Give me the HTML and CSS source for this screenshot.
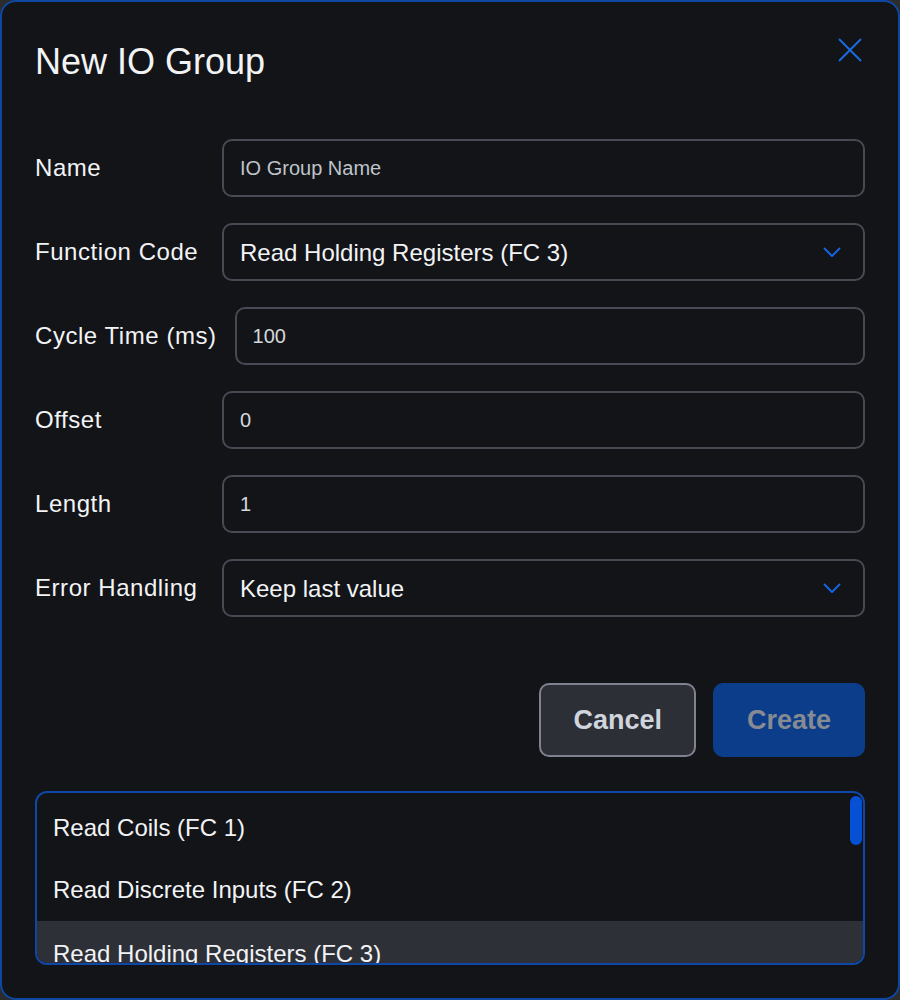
FILE: index.html
```html
<!DOCTYPE html>
<html lang="en">
<head>
    <meta charset="UTF-8">
    <meta name="viewport" content="width=device-width, initial-scale=1.0">
    <title>New IO Group</title>
    <link rel="stylesheet" href="styles.css">
</head>
<body>
    <div class="dialog">
        <div class="dialog-header">
            <h2>New IO Group</h2>
            <button class="close-btn" type="button" aria-label="Close">
                <svg width="24" height="24" viewBox="0 0 24 24">
                    <path d="M1 1 L23 23 M23 1 L1 23" stroke="#1a6be0" stroke-width="2" fill="none" />
                </svg>
            </button>
        </div>

        <form class="io-form">
            <div class="form-row">
                <label for="name">Name</label>
                <input type="text" id="name" placeholder="IO Group Name" />
            </div>

            <div class="form-row">
                <label for="fc">Function Code</label>
                <div class="select-wrap">
                    <select id="fc">
                        <option>Read Coils (FC 1)</option>
                        <option>Read Discrete Inputs (FC 2)</option>
                        <option selected>Read Holding Registers (FC 3)</option>
                    </select>
                    <svg class="chevron" width="18" height="10" viewBox="0 0 18 10">
                        <path d="M1 1 L9 9 L17 1" stroke="#1565e0" stroke-width="2" fill="none" />
                    </svg>
                </div>
            </div>

            <div class="form-row">
                <label for="cycle">Cycle Time (ms)</label>
                <input type="text" id="cycle" value="100" />
            </div>

            <div class="form-row">
                <label for="offset">Offset</label>
                <input type="text" id="offset" value="0" />
            </div>

            <div class="form-row">
                <label for="length">Length</label>
                <input type="text" id="length" value="1" />
            </div>

            <div class="form-row">
                <label for="err">Error Handling</label>
                <div class="select-wrap">
                    <select id="err">
                        <option selected>Keep last value</option>
                        <option>Set to zero</option>
                    </select>
                    <svg class="chevron" width="18" height="10" viewBox="0 0 18 10">
                        <path d="M1 1 L9 9 L17 1" stroke="#1565e0" stroke-width="2" fill="none" />
                    </svg>
                </div>
            </div>

            <div class="actions">
                <button type="button" class="btn btn-cancel">Cancel</button>
                <button type="submit" class="btn btn-create" disabled>Create</button>
            </div>
        </form>

        <!-- open listbox of the Function Code select -->
        <div class="listbox">
            <ul>
                <li>Read Coils (FC 1)</li>
                <li>Read Discrete Inputs (FC 2)</li>
                <li class="active">Read Holding Registers (FC 3)</li>
            </ul>
            <div class="scroll-thumb"></div>
        </div>
    </div>
</body>
</html>
```

FILE: styles.css
```css
body {
    margin: 0;
    background-color: #2c2c2c;
    font-family: "Liberation Sans", Arial, sans-serif;
    color: #f2f3f5;
}

.dialog {
    box-sizing: border-box;
    width: 900px;
    height: 1000px;
    background: #131418;
    border: 2px solid #0e47a1;
    border-radius: 16px;
    padding: 38px 33px 0 33px;
}

.dialog-header {
    display: flex;
    justify-content: space-between;
    align-items: flex-start;
}

.dialog-header h2 {
    margin: 0;
    font-size: 36px;
    line-height: 44px;
    font-weight: normal;
    color: #f2f3f5;
}

.close-btn {
    background: none;
    border: none;
    padding: 0;
    margin: -2px 3px 0 0;
    cursor: pointer;
    display: flex;
}

.io-form {
    margin-top: 55px;
    display: flex;
    flex-direction: column;
    gap: 26px;
}

.form-row {
    display: flex;
    align-items: center;
    gap: 18px;
}

.form-row label {
    min-width: 169px;
    font-size: 24px;
    letter-spacing: 0.55px;
    color: #f2f3f5;
    white-space: nowrap;
}

.form-row input,
.form-row select {
    box-sizing: border-box;
    width: 100%;
    height: 58px;
    background: #131418;
    border: 2px solid #474a52;
    border-radius: 10px;
    padding: 0 16px;
    font-family: "Liberation Sans", Arial, sans-serif;
    outline: none;
}

.form-row input {
    flex: 1;
    font-size: 20px;
    color: #d5d8dd;
}

.form-row input::placeholder {
    color: #bfc3ca;
}

.select-wrap {
    flex: 1;
    position: relative;
    display: flex;
}

.form-row select {
    appearance: none;
    -webkit-appearance: none;
    font-size: 24px;
    color: #f2f3f5;
}

.chevron {
    position: absolute;
    right: 24px;
    top: 24px;
    pointer-events: none;
}

.actions {
    display: flex;
    justify-content: flex-end;
    gap: 17px;
    margin-top: 40px;
}

.btn {
    height: 74px;
    padding: 0 32px;
    border-radius: 10px;
    font-family: "Liberation Sans", Arial, sans-serif;
    font-size: 27px;
    font-weight: bold;
    cursor: pointer;
}

.btn-cancel {
    background: #2d2f37;
    border: 2px solid #80838f;
    color: #d0d5dd;
}

.btn-create {
    background: #0b3d8a;
    border: 2px solid #0b3d8a;
    color: #868a92;
    cursor: default;
}

.listbox {
    position: relative;
    box-sizing: border-box;
    height: 174px;
    margin-top: 34px;
    border: 2px solid #0d47a8;
    border-radius: 12px;
    overflow: hidden;
    background: #131418;
}

.listbox ul {
    list-style: none;
    margin: 0;
    padding: 4px 0 0 0;
}

.listbox li {
    height: 62px;
    line-height: 62px;
    padding-left: 16px;
    font-size: 24px;
    color: #f2f3f5;
}

.listbox li.active {
    height: 66px;
    line-height: 66px;
    background: #2e3038;
}

.scroll-thumb {
    position: absolute;
    top: 3px;
    right: 1px;
    width: 12px;
    height: 49px;
    border-radius: 6px;
    background: #0650d4;
}
```
